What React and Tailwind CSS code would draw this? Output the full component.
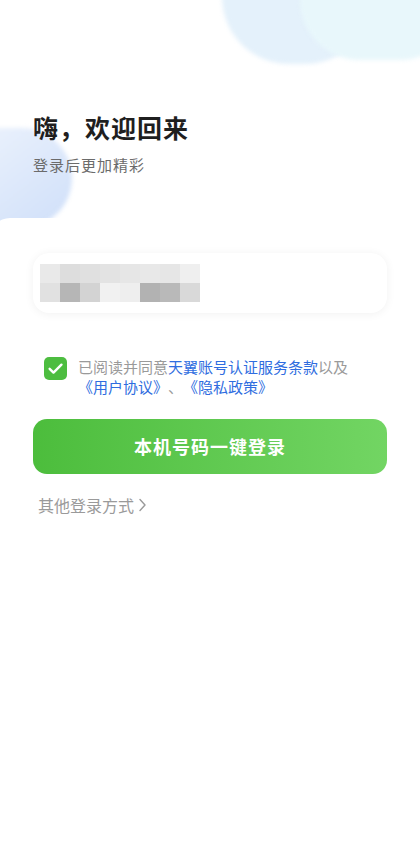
import React, { useState } from 'react'

const mosaicTop = ['#e9e9e9', '#dddddd', '#e0e0e0', '#e3e3e3', '#e6e6e6', '#e8e8e8', '#e6e6e6', '#efefef']
const mosaicBottom = ['#e1e1e1', '#b6b6b6', '#d3d3d3', '#f1f1f1', '#eeeeee', '#b2b2b2', '#b9b9b9', '#d9d9d9']

const App = () => {
  const [agreed, setAgreed] = useState(true)

  return (
    <div
      className="relative w-[420px] h-[846px] bg-white overflow-hidden [text-spacing-trim:space-all]"
      style={{ fontFamily: '"Noto Sans CJK SC", "Noto Sans", sans-serif' }}
    >
      {/* decorative clouds */}
      <div className="absolute -top-[70px] left-[222px] w-[150px] h-[134px] rounded-full bg-[#e4f1fb] blur-[2px]" />
      <div className="absolute -top-[60px] left-[300px] w-[160px] h-[120px] rounded-full bg-[#e8f7fb] blur-[2px]" />
      <div className="absolute top-[128px] -left-[60px] w-[132px] h-[100px] rounded-full bg-gradient-to-br from-[#f0f5fd] to-[#cfdff9] blur-[2px]" />
      <div className="absolute top-[218px] -left-[10px] w-[120px] h-[40px] rounded-full bg-white" />

      <div className="relative flex flex-col px-[33px]">
        <h1 className="mt-[110px] text-[25px] leading-[34px] font-bold text-[#1f1f1f] tracking-[1px]">
          嗨，欢迎回来
        </h1>
        <p className="mt-[11px] text-[15px] leading-[20px] text-[#6b6b6b] tracking-[1px]">登录后更加精彩</p>

        <div className="mt-[78px] h-[60px] rounded-[16px] bg-white shadow-[0_1px_10px_rgba(0,0,0,0.06)] flex items-center pl-[7px]">
          <div className="flex flex-col blur-[0.6px]">
            <div className="flex">
              {mosaicTop.map((c, i) => (
                <div key={i} className="w-[20px] h-[19px]" style={{ background: c }} />
              ))}
            </div>
            <div className="flex">
              {mosaicBottom.map((c, i) => (
                <div key={i} className="w-[20px] h-[19px]" style={{ background: c }} />
              ))}
            </div>
          </div>
        </div>

        <div className="mt-[44px] flex items-start pl-[11px]">
          <button
            onClick={() => setAgreed(!agreed)}
            className={`w-[23px] h-[23px] rounded-[5px] flex items-center justify-center shrink-0 ${agreed ? 'bg-[#4dbd40]' : 'border border-[#ccc]'}`}
          >
            {agreed && (
              <svg width="17" height="17" viewBox="0 0 16 16" fill="none">
                <path d="M2.5 8.3l3.6 3.5L13.6 4.4" stroke="#fff" strokeWidth="2.3" strokeLinecap="round" strokeLinejoin="round" />
              </svg>
            )}
          </button>
          <p className="ml-[11px] w-[282px] text-[15px] leading-[20px] text-[#9a9a9a]">
            已阅读并同意<span className="text-[#2f6de0]">天翼账号认证服务条款</span>以及
            <span className="text-[#2f6de0]">《用户协议》</span>、<span className="text-[#2f6de0]">《隐私政策》</span>
          </p>
        </div>

        <button className="mt-[22px] h-[55px] rounded-[14px] bg-gradient-to-r from-[#4cbd3c] to-[#72d563] text-white text-[18px] font-bold tracking-[1px]">
          本机号码一键登录
        </button>

        <div className="mt-[20px] pl-[5px] flex items-center text-[16px] leading-[22px] text-[#9a9a9a]">
          其他登录方式
          <svg className="ml-[4px]" width="9" height="14" viewBox="0 0 9 14" fill="none">
            <path d="M2 1.5l5 5.5-5 5.5" stroke="#9a9a9a" strokeWidth="1.4" strokeLinecap="round" strokeLinejoin="round" />
          </svg>
        </div>
      </div>
    </div>
  )
}

export default App
